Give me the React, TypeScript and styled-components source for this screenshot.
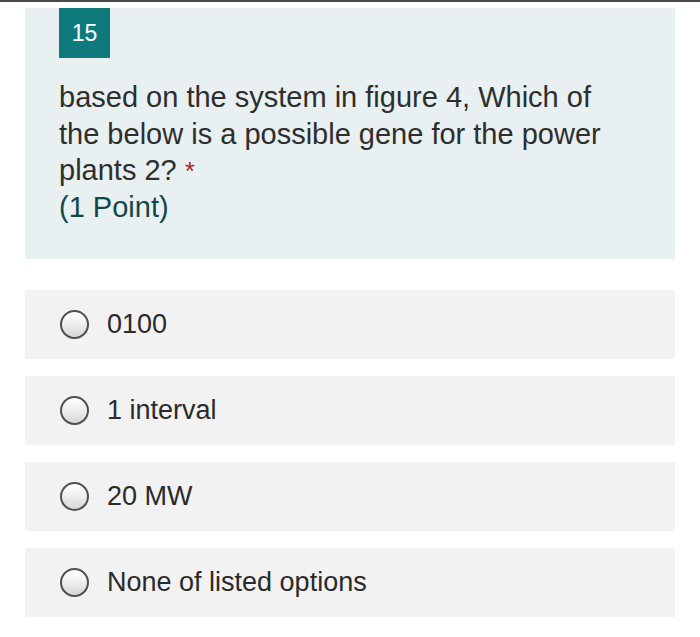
import React from 'react';
import styled, { createGlobalStyle } from 'styled-components';

const GlobalStyle = createGlobalStyle`
  html, body {
    margin: 0;
    padding: 0;
    background: #ffffff;
  }
  body {
    font-family: 'Liberation Sans', Arial, sans-serif;
  }
`;

const Page = styled.div`
  border-top: 2px solid #4a4a4a;
  padding: 6px 25px 20px 25px;
  display: flex;
  flex-direction: column;
  gap: 17px;
`;

const QuestionCard = styled.div`
  background: #e8f0f1;
  padding: 0 34px 33px 34px;
  margin-bottom: 14px;
`;

const Badge = styled.div`
  width: 51px;
  height: 50px;
  background: #0f7a7c;
  color: #ffffff;
  font-size: 23px;
  display: flex;
  align-items: center;
  justify-content: center;
`;

const QuestionText = styled.div`
  margin-top: 21px;
  max-width: 560px;
  font-size: 29px;
  line-height: 36.7px;
  color: #2e2e2e;
`;

const Required = styled.span`
  color: #a4262c;
  margin-left: 8px;
  font-size: 26px;
  line-height: 0;
`;

const Points = styled.div`
  color: #134848;
`;

const Option = styled.label`
  display: flex;
  align-items: center;
  height: 69px;
  background: #f2f2f2;
  padding-left: 35px;
  gap: 18px;
  font-size: 27px;
  color: #2a2a2a;
`;

const Radio = styled.span`
  width: 25px;
  height: 25px;
  border-radius: 50%;
  border: 2px solid #505050;
  background: linear-gradient(180deg, #ffffff 0%, #f0f0f0 45%, #d6d6d6 100%);
  flex-shrink: 0;
`;

const options = ['0100', '1 interval', '20 MW', 'None of listed options'];

export default function App() {
  return (
    <>
      <GlobalStyle />
      <Page>
        <QuestionCard>
          <Badge>15</Badge>
          <QuestionText>
            based on the system in figure 4, Which of the below is a possible gene for the power plants 2?
            <Required>*</Required>
            <Points>(1 Point)</Points>
          </QuestionText>
        </QuestionCard>
        {options.map((o) => (
          <Option key={o}>
            <Radio />
            {o}
          </Option>
        ))}
      </Page>
    </>
  );
}
